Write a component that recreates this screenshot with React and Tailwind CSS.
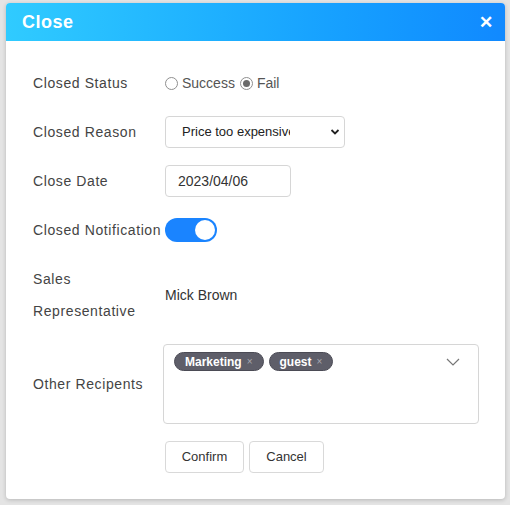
import { useState } from 'react'

const Label = ({ children }) => (
  <div className="w-[132px] shrink-0 text-[14px] tracking-[0.6px] text-[#444]">{children}</div>
)

const Radio = ({ checked, label, onClick }) => (
  <label className="flex items-center gap-[4px] cursor-pointer" onClick={onClick}>
    <span className="w-[13px] h-[13px] rounded-full border border-[#8f8f8f] bg-white flex items-center justify-center">
      {checked && <span className="w-[7px] h-[7px] rounded-full bg-[#6b6b6b]" />}
    </span>
    <span className="text-[14px] text-[#555]">{label}</span>
  </label>
)

const Tag = ({ children }) => (
  <span className="flex items-center h-[19px] px-[10px] gap-[5px] rounded-full bg-[#5e5e69] border border-[#4b4b55] text-white text-[12px] font-bold">
    {children}
    <span className="text-[10px] text-[#a8a8b0] font-normal">×</span>
  </span>
)

export default function App() {
  const [status, setStatus] = useState('fail')
  const [notify, setNotify] = useState(true)

  return (
    <div className="w-[510px] h-[505px] bg-[#e4e4e4] pt-[3px] pl-[6px] overflow-hidden" style={{ fontFamily: '"Liberation Sans", Arial, sans-serif' }}>
      <div className="w-[499px] h-[496px] bg-white rounded-[4px] shadow-[0_1px_4px_rgba(0,0,0,0.2)] overflow-hidden">
        <div className="h-[38px] flex items-center justify-between pl-[16px] pr-[12px] bg-gradient-to-r from-[#30cbff] to-[#1189ff]">
          <span className="text-white text-[18px] font-bold tracking-[0.5px]">Close</span>
          <span className="text-white text-[17px] font-bold leading-none">✕</span>
        </div>

        <div className="flex flex-col gap-[17px] pl-[27px] pt-[26px]">
          <div className="flex items-center h-[32px]">
            <Label>Closed Status</Label>
            <div className="flex items-center gap-[5px]">
              <Radio checked={status === 'success'} label="Success" onClick={() => setStatus('success')} />
              <Radio checked={status === 'fail'} label="Fail" onClick={() => setStatus('fail')} />
            </div>
          </div>

          <div className="flex items-center h-[32px]">
            <Label>Closed Reason</Label>
            <div className="w-[180px] h-[32px] border border-[#d6d6d6] rounded-[4px] flex items-center justify-between pl-[16px] pr-[4px]">
              <span className="text-[13px] text-[#222] whitespace-nowrap overflow-hidden w-[108px]">Price too expensive</span>
              <svg width="10" height="10" viewBox="0 0 10 10">
                <path d="M1.5 3 L5 6.5 L8.5 3" fill="none" stroke="#222" strokeWidth="1.8" />
              </svg>
            </div>
          </div>

          <div className="flex items-center h-[32px]">
            <Label>Close Date</Label>
            <div className="w-[126px] h-[32px] border border-[#d6d6d6] rounded-[4px] flex items-center pl-[12px] text-[14px] text-[#333]">
              2023/04/06
            </div>
          </div>

          <div className="flex items-center h-[32px]">
            <Label>Closed Notification</Label>
            <button
              onClick={() => setNotify(!notify)}
              className={`w-[52px] h-[24px] rounded-full flex items-center px-[2px] ${notify ? 'bg-[#1a84ff] justify-end' : 'bg-[#ccc] justify-start'}`}
            >
              <span className="w-[20px] h-[20px] rounded-full bg-white" />
            </button>
          </div>

          <div className="flex items-center h-[64px]">
            <div className="w-[132px] shrink-0 text-[14px] tracking-[0.6px] text-[#444] leading-[32px]">
              Sales<br />Representative
            </div>
            <span className="text-[14px] text-[#333]">Mick Brown</span>
          </div>

          <div className="flex items-center h-[80px]">
            <Label>Other Recipents</Label>
            <div className="w-[316px] h-[80px] -ml-[2px] border border-[#d6d6d6] rounded-[4px] flex items-start justify-between pl-[10px] pr-[18px] pt-[7px]">
              <div className="flex gap-[5px]">
                <Tag>Marketing</Tag>
                <Tag>guest</Tag>
              </div>
              <svg width="14" height="10" viewBox="0 0 14 10" className="mt-[5px]">
                <path d="M1 2 L7 8 L13 2" fill="none" stroke="#777" strokeWidth="1.2" />
              </svg>
            </div>
          </div>

          <div className="flex items-center h-[32px] pl-[132px] gap-[5px]">
            <button className="w-[79px] h-[32px] border border-[#d9d9d9] rounded-[4px] text-[13px] text-[#333] bg-white">Confirm</button>
            <button className="w-[75px] h-[32px] border border-[#d9d9d9] rounded-[4px] text-[13px] text-[#333] bg-white">Cancel</button>
          </div>
        </div>
      </div>
    </div>
  )
}
